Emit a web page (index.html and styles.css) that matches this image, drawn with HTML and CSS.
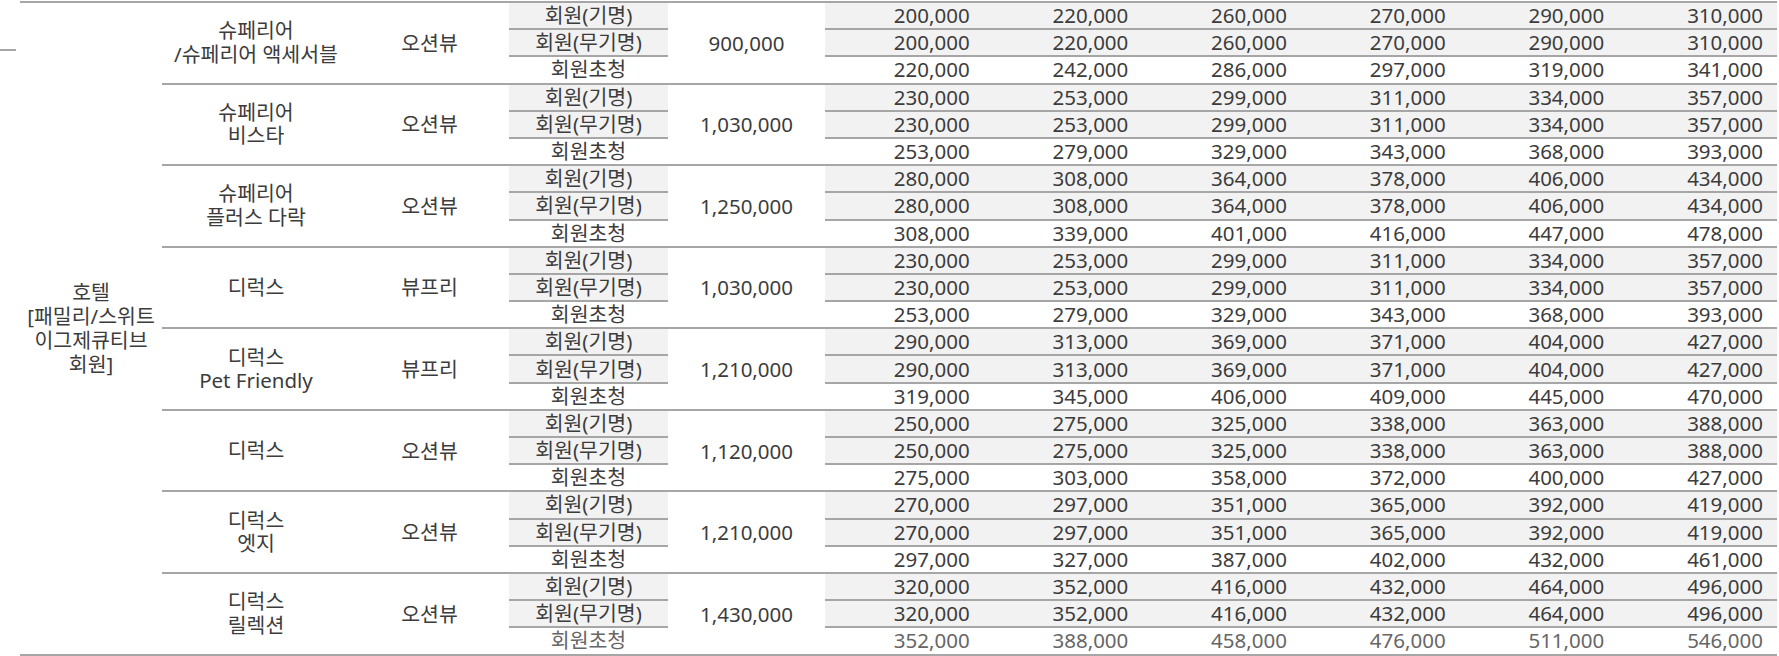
FILE: index.html
```html
<!DOCTYPE html>
<html lang="ko">
<head>
<meta charset="utf-8">
<title>요금표</title>
<link rel="stylesheet" href="styles.css">
</head>
<body>
<div class="page">
  <div class="stub"><div class="stub-line"></div></div>
  <table class="rates">
    <colgroup>
      <col class="c-cat"><col class="c-room"><col class="c-view"><col class="c-mem"><col class="c-base">
      <col class="c-p"><col class="c-p"><col class="c-p"><col class="c-p"><col class="c-p"><col class="c-p">
    </colgroup>
    <tbody>
      <tr class="g">
        <td class="cat" rowspan="24"><span class="ln">호텔</span><span class="ln">[패밀리/스위트</span><span class="ln">이그제큐티브</span><span class="ln">회원]</span></td>
        <td class="room" rowspan="3"><span class="ln">슈페리어</span><span class="ln">/슈페리어 액세서블</span></td>
        <td class="view" rowspan="3">오션뷰</td>
        <td class="m s">회원(기명)</td>
        <td class="base" rowspan="3">900,000</td>
        <td class="p s">200,000</td><td class="p s">220,000</td><td class="p s">260,000</td><td class="p s">270,000</td><td class="p s">290,000</td><td class="p s">310,000</td>
      </tr>
      <tr><td class="m s">회원(무기명)</td><td class="p s">200,000</td><td class="p s">220,000</td><td class="p s">260,000</td><td class="p s">270,000</td><td class="p s">290,000</td><td class="p s">310,000</td></tr>
      <tr><td class="m">회원초청</td><td class="p">220,000</td><td class="p">242,000</td><td class="p">286,000</td><td class="p">297,000</td><td class="p">319,000</td><td class="p">341,000</td></tr>

      <tr class="g">
        <td class="room" rowspan="3"><span class="ln">슈페리어</span><span class="ln">비스타</span></td>
        <td class="view" rowspan="3">오션뷰</td>
        <td class="m s">회원(기명)</td>
        <td class="base" rowspan="3">1,030,000</td>
        <td class="p s">230,000</td><td class="p s">253,000</td><td class="p s">299,000</td><td class="p s">311,000</td><td class="p s">334,000</td><td class="p s">357,000</td>
      </tr>
      <tr><td class="m s">회원(무기명)</td><td class="p s">230,000</td><td class="p s">253,000</td><td class="p s">299,000</td><td class="p s">311,000</td><td class="p s">334,000</td><td class="p s">357,000</td></tr>
      <tr><td class="m">회원초청</td><td class="p">253,000</td><td class="p">279,000</td><td class="p">329,000</td><td class="p">343,000</td><td class="p">368,000</td><td class="p">393,000</td></tr>

      <tr class="g">
        <td class="room" rowspan="3"><span class="ln">슈페리어</span><span class="ln">플러스 다락</span></td>
        <td class="view" rowspan="3">오션뷰</td>
        <td class="m s">회원(기명)</td>
        <td class="base" rowspan="3">1,250,000</td>
        <td class="p s">280,000</td><td class="p s">308,000</td><td class="p s">364,000</td><td class="p s">378,000</td><td class="p s">406,000</td><td class="p s">434,000</td>
      </tr>
      <tr><td class="m s">회원(무기명)</td><td class="p s">280,000</td><td class="p s">308,000</td><td class="p s">364,000</td><td class="p s">378,000</td><td class="p s">406,000</td><td class="p s">434,000</td></tr>
      <tr><td class="m">회원초청</td><td class="p">308,000</td><td class="p">339,000</td><td class="p">401,000</td><td class="p">416,000</td><td class="p">447,000</td><td class="p">478,000</td></tr>

      <tr class="g">
        <td class="room" rowspan="3">디럭스</td>
        <td class="view" rowspan="3">뷰프리</td>
        <td class="m s">회원(기명)</td>
        <td class="base" rowspan="3">1,030,000</td>
        <td class="p s">230,000</td><td class="p s">253,000</td><td class="p s">299,000</td><td class="p s">311,000</td><td class="p s">334,000</td><td class="p s">357,000</td>
      </tr>
      <tr><td class="m s">회원(무기명)</td><td class="p s">230,000</td><td class="p s">253,000</td><td class="p s">299,000</td><td class="p s">311,000</td><td class="p s">334,000</td><td class="p s">357,000</td></tr>
      <tr><td class="m">회원초청</td><td class="p">253,000</td><td class="p">279,000</td><td class="p">329,000</td><td class="p">343,000</td><td class="p">368,000</td><td class="p">393,000</td></tr>

      <tr class="g">
        <td class="room" rowspan="3"><span class="ln">디럭스</span><span class="ln">Pet Friendly</span></td>
        <td class="view" rowspan="3">뷰프리</td>
        <td class="m s">회원(기명)</td>
        <td class="base" rowspan="3">1,210,000</td>
        <td class="p s">290,000</td><td class="p s">313,000</td><td class="p s">369,000</td><td class="p s">371,000</td><td class="p s">404,000</td><td class="p s">427,000</td>
      </tr>
      <tr><td class="m s">회원(무기명)</td><td class="p s">290,000</td><td class="p s">313,000</td><td class="p s">369,000</td><td class="p s">371,000</td><td class="p s">404,000</td><td class="p s">427,000</td></tr>
      <tr><td class="m">회원초청</td><td class="p">319,000</td><td class="p">345,000</td><td class="p">406,000</td><td class="p">409,000</td><td class="p">445,000</td><td class="p">470,000</td></tr>

      <tr class="g">
        <td class="room" rowspan="3">디럭스</td>
        <td class="view" rowspan="3">오션뷰</td>
        <td class="m s">회원(기명)</td>
        <td class="base" rowspan="3">1,120,000</td>
        <td class="p s">250,000</td><td class="p s">275,000</td><td class="p s">325,000</td><td class="p s">338,000</td><td class="p s">363,000</td><td class="p s">388,000</td>
      </tr>
      <tr><td class="m s">회원(무기명)</td><td class="p s">250,000</td><td class="p s">275,000</td><td class="p s">325,000</td><td class="p s">338,000</td><td class="p s">363,000</td><td class="p s">388,000</td></tr>
      <tr><td class="m">회원초청</td><td class="p">275,000</td><td class="p">303,000</td><td class="p">358,000</td><td class="p">372,000</td><td class="p">400,000</td><td class="p">427,000</td></tr>

      <tr class="g">
        <td class="room" rowspan="3"><span class="ln">디럭스</span><span class="ln">엣지</span></td>
        <td class="view" rowspan="3">오션뷰</td>
        <td class="m s">회원(기명)</td>
        <td class="base" rowspan="3">1,210,000</td>
        <td class="p s">270,000</td><td class="p s">297,000</td><td class="p s">351,000</td><td class="p s">365,000</td><td class="p s">392,000</td><td class="p s">419,000</td>
      </tr>
      <tr><td class="m s">회원(무기명)</td><td class="p s">270,000</td><td class="p s">297,000</td><td class="p s">351,000</td><td class="p s">365,000</td><td class="p s">392,000</td><td class="p s">419,000</td></tr>
      <tr><td class="m">회원초청</td><td class="p">297,000</td><td class="p">327,000</td><td class="p">387,000</td><td class="p">402,000</td><td class="p">432,000</td><td class="p">461,000</td></tr>

      <tr class="g">
        <td class="room" rowspan="3"><span class="ln">디럭스</span><span class="ln">릴렉션</span></td>
        <td class="view" rowspan="3">오션뷰</td>
        <td class="m s">회원(기명)</td>
        <td class="base" rowspan="3">1,430,000</td>
        <td class="p s">320,000</td><td class="p s">352,000</td><td class="p s">416,000</td><td class="p s">432,000</td><td class="p s">464,000</td><td class="p s">496,000</td>
      </tr>
      <tr><td class="m s">회원(무기명)</td><td class="p s">320,000</td><td class="p s">352,000</td><td class="p s">416,000</td><td class="p s">432,000</td><td class="p s">464,000</td><td class="p s">496,000</td></tr>
      <tr class="last"><td class="m">회원초청</td><td class="p">352,000</td><td class="p">388,000</td><td class="p">458,000</td><td class="p">476,000</td><td class="p">511,000</td><td class="p">546,000</td></tr>
    </tbody>
  </table>
</div>
</body>
</html>
```

FILE: styles.css
```css
html, body {
  margin: 0;
  padding: 0;
  background: #ffffff;
}

.page {
  display: flex;
  align-items: flex-start;
  gap: 4px;
  padding-top: 1px;
  font-family: "Noto Sans", "Noto Sans CJK KR", sans-serif;
  font-size: 20.5px;
  color: #3c3c3c;
}

.stub {
  width: 16px;
  padding-top: 48px;
  flex: none;
}

.stub-line {
  height: 2px;
  background: #a6a6a6;
}

.rates {
  width: 1757px;
  table-layout: fixed;
  border-collapse: collapse;
  border-top: 2px solid #a6a6a6;
  border-bottom: 2px solid #a6a6a6;
  flex: none;
}

.c-cat { width: 142px; }
.c-room { width: 188px; }
.c-view { width: 159px; }
.c-mem { width: 159px; }
.c-base { width: 157px; }
.c-p { width: 158.66px; }

.rates tr {
  height: 27.2px;
}

.rates td {
  padding: 0;
  line-height: 24px;
  vertical-align: middle;
  text-align: center;
  white-space: nowrap;
}

.rates td .ln {
  display: block;
}

.rates tr.g td {
  border-top: 2px solid #a6a6a6;
}

.rates td.m,
.rates td.p {
  border-top: 2px solid #a6a6a6;
  line-height: 25px;
}

.rates td.s {
  background: #f2f2f2;
}

.rates td.p {
  text-align: right;
  padding-right: 14px;
}

.rates td.cat {
  border-top: 2px solid #a6a6a6;
  border-bottom: 2px solid #a6a6a6;
  line-height: 24px;
}

.rates td.room {
  line-height: 23.5px;
}

.rates tr.last td {
  color: #666666;
}
```
